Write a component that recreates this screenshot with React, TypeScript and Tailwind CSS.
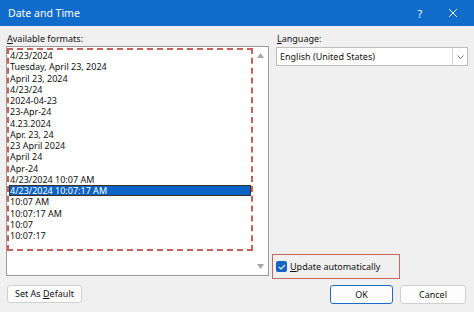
import React from "react";

const formats = [
  "4/23/2024",
  "Tuesday, April 23, 2024",
  "April 23, 2024",
  "4/23/24",
  "2024-04-23",
  "23-Apr-24",
  "4.23.2024",
  "Apr. 23, 24",
  "23 April 2024",
  "April 24",
  "Apr-24",
  "4/23/2024 10:07 AM",
  "4/23/2024 10:07:17 AM",
  "10:07 AM",
  "10:07:17 AM",
  "10:07",
  "10:07:17",
];

const SELECTED = 12;

function App() {
  return (
    <div
      className="w-[474px] h-[312px] bg-[#f0f0f0] flex flex-col text-[#111] overflow-hidden"
      style={{ fontFamily: '"Noto Sans", "Open Sans", sans-serif' }}
    >
      {/* title bar */}
      <div className="h-[26px] bg-[#0f6ccb] flex items-center text-white shrink-0">
        <span className="ml-[8px] text-[10.5px] leading-none flex-1">Date and Time</span>
        <span className="w-[20px] text-center text-[11px] leading-none mr-[18px]">?</span>
        <svg width="10" height="10" viewBox="0 0 10 10" className="mr-[16px]">
          <path d="M1 1 L9 9 M9 1 L1 9" stroke="white" strokeWidth="1" />
        </svg>
      </div>

      {/* body */}
      <div className="h-[253px] flex px-[6px] shrink-0">
        {/* left column */}
        <div className="w-[263px] pt-[6px] flex flex-col">
          <div className="h-[14px] text-[9px] leading-[14px] pl-[1px]">
            <span className="underline">A</span>vailable formats:
          </div>
          <div className="h-[230px] bg-white border border-[#9a9a9a] flex">
            <div className="flex-1 pt-[1px]">
              <div className="w-[246px] h-[203px] border-2 border-dashed border-[#c6605a] flex flex-col overflow-hidden">
                {formats.map((f, i) => (
                  <div
                    key={f}
                    className={
                      i === SELECTED
                        ? "h-[11.25px] shrink-0 leading-[9px] text-[9px] pl-0 bg-[#0b63c6] text-white border border-[#3b2f24]"
                        : "h-[11.25px] shrink-0 leading-[11.25px] text-[9px] pl-[1px]"
                    }
                  >
                    {f}
                  </div>
                ))}
              </div>
            </div>
            <div className="w-[15px] flex flex-col items-center justify-between py-[6px]">
              <svg width="7" height="5" viewBox="0 0 7 5">
                <path d="M3.5 0 L7 5 L0 5 Z" fill="#a8a8a8" />
              </svg>
              <svg width="7" height="5" viewBox="0 0 7 5">
                <path d="M0 0 L7 0 L3.5 5 Z" fill="#a8a8a8" />
              </svg>
            </div>
          </div>
        </div>

        {/* right column */}
        <div className="flex-1 ml-[3px] pt-[6px] flex flex-col">
          <div className="h-[14px] text-[9px] leading-[14px] pl-[5px]">
            <span className="underline">L</span>anguage:
          </div>
          <div className="ml-[4px] mt-[1px] h-[19px] bg-white border border-[#bdbdbd] flex items-center">
            <span className="flex-1 text-[9px] pl-[3px]">English (United States)</span>
            <div className="w-[15px] h-full border-l border-[#d4d4d4] flex items-center justify-center">
              <svg width="7" height="4" viewBox="0 0 7 4">
                <path d="M0.5 0.5 L3.5 3.5 L6.5 0.5" stroke="#777" strokeWidth="1" fill="none" />
              </svg>
            </div>
          </div>
          <div className="mt-auto w-[128px] h-[25px] border-[1.5px] border-[#c4685c] flex items-center pl-[3px] gap-[3px]">
            <div className="w-[11px] h-[11px] rounded-[2px] bg-[#1563c2] flex items-center justify-center">
              <svg width="8" height="6" viewBox="0 0 8 6">
                <path d="M0.8 3 L3 5 L7.2 0.8" stroke="white" strokeWidth="1.1" fill="none" />
              </svg>
            </div>
            <span className="text-[9px]">
              <span className="underline">U</span>pdate automatically
            </span>
          </div>
        </div>
      </div>

      {/* buttons */}
      <div className="mt-[6px] h-[19px] flex px-[7px] shrink-0">
        <button className="w-[75px] h-[18px] bg-[#fdfdfd] border border-[#d0d0d0] rounded-[3px] text-[9px]">
          Set As <span className="underline">D</span>efault
        </button>
        <div className="flex-1" />
        <button className="w-[63px] h-[19px] bg-[#fdfdfd] border border-[#1d6cc4] rounded-[3px] text-[9px]">
          OK
        </button>
        <button className="w-[66px] h-[19px] ml-[7px] bg-[#fdfdfd] border border-[#d0d0d0] rounded-[3px] text-[9px]">
          Cancel
        </button>
        <div className="w-[1px]" />
      </div>
    </div>
  );
}

export default App;
